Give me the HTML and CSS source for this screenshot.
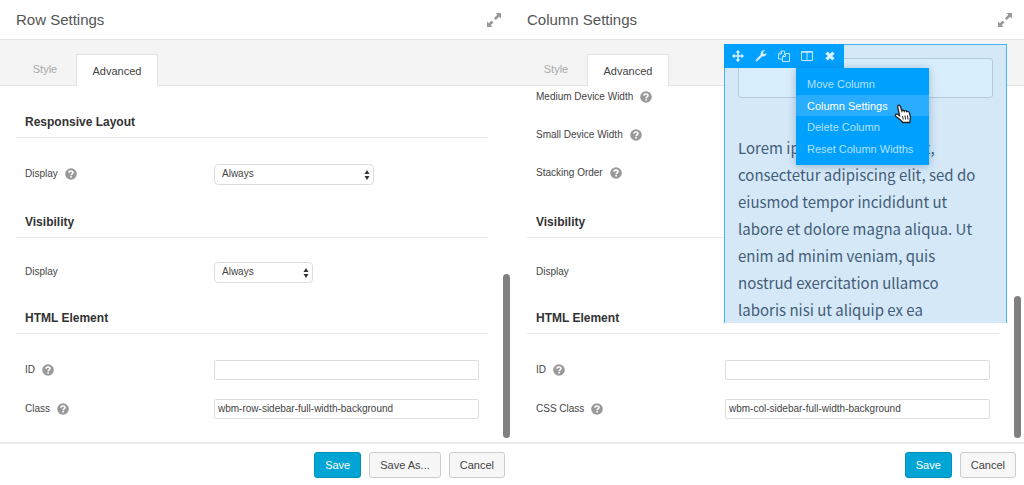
FILE: index.html
```html
<!DOCTYPE html>
<html lang="en">
<head>
<meta charset="utf-8">
<title>Row and Column Settings</title>
<link rel="stylesheet" href="styles.css">
</head>
<body>
<svg class="sprite" aria-hidden="true">
  <symbol id="expand" viewBox="0 0 14 14">
    <path d="M8.500 0H14V5.500L12.200 3.700 8.800 7.100 6.900 5.200 10.300 1.800ZM5.500 14H0V8.500L1.800 10.300 4.600 7.500 6.500 9.400 3.700 12.200Z"/>
  </symbol>
  <symbol id="help" viewBox="0 0 12 12">
    <circle cx="6" cy="6" r="5.800"/>
    <path d="M4 4.700C4.100 2.500 8 2.500 8 4.600 8 5.900 6.100 5.900 6.100 7.300M6.100 8.100V9.600" fill="none" stroke="#fff" stroke-width="1.600"/>
  </symbol>
</svg>
<div class="workspace">
  <section class="panel">
    <header class="panel-header">
      <h1 class="panel-title">Row Settings</h1>
      <button class="expand" aria-label="Expand"><svg><use href="#expand"/></svg></button>
    </header>
    <nav class="tabs">
      <button class="tab">Style</button>
      <button class="tab tab-active">Advanced</button>
    </nav>
    <div class="panel-body">
      <div class="sections">
        <section class="group">
          <h2 class="group-title">Responsive Layout</h2>
          <div class="fields">
            <div class="field field-tall">
              <span class="field-name"><label for="row-layout">Display</label><svg class="help"><use href="#help"/></svg></span>
              <span class="picker picker-wide"><select id="row-layout"><option>Always</option></select><svg viewBox="0 0 6 10"><path d="M3 0 5.500 4H.5ZM.5 6h5L3 10Z"/></svg></span>
            </div>
          </div>
        </section>
        <section class="group">
          <h2 class="group-title">Visibility</h2>
          <div class="fields">
            <div class="field field-short">
              <span class="field-name"><label for="row-visibility">Display</label></span>
              <span class="picker"><select id="row-visibility"><option>Always</option></select><svg viewBox="0 0 6 10"><path d="M3 0 5.500 4H.5ZM.5 6h5L3 10Z"/></svg></span>
            </div>
          </div>
        </section>
        <section class="group">
          <h2 class="group-title">HTML Element</h2>
          <div class="fields fields-last">
            <div class="field">
              <span class="field-name"><label for="row-id">ID</label><svg class="help"><use href="#help"/></svg></span>
              <input class="text-input" id="row-id" type="text">
            </div>
            <div class="field">
              <span class="field-name"><label for="row-class">Class</label><svg class="help"><use href="#help"/></svg></span>
              <input class="text-input" id="row-class" type="text" value="wbm-row-sidebar-full-width-background">
            </div>
          </div>
        </section>
      </div>
      <div class="scroll-thumb"></div>
    </div>
    <footer class="panel-footer">
      <button class="button button-primary">Save</button>
      <button class="button">Save As...</button>
      <button class="button">Cancel</button>
    </footer>
  </section>

  <section class="panel panel-column">
    <header class="panel-header">
      <h1 class="panel-title">Column Settings</h1>
      <button class="expand" aria-label="Expand"><svg><use href="#expand"/></svg></button>
    </header>
    <nav class="tabs">
      <button class="tab">Style</button>
      <button class="tab tab-active">Advanced</button>
    </nav>
    <div class="panel-body">
      <div class="sections sections-scrolled">
        <section class="group">
          <div class="fields fields-first">
            <div class="field"><span class="field-name">Medium Device Width<svg class="help"><use href="#help"/></svg></span></div>
            <div class="field"><span class="field-name">Small Device Width<svg class="help"><use href="#help"/></svg></span></div>
            <div class="field"><span class="field-name">Stacking Order<svg class="help"><use href="#help"/></svg></span></div>
          </div>
        </section>
        <section class="group">
          <h2 class="group-title">Visibility</h2>
          <div class="fields">
            <div class="field field-short"><span class="field-name">Display</span></div>
          </div>
        </section>
        <section class="group">
          <h2 class="group-title">HTML Element</h2>
          <div class="fields fields-last">
            <div class="field">
              <span class="field-name"><label for="col-id">ID</label><svg class="help"><use href="#help"/></svg></span>
              <input class="text-input" id="col-id" type="text">
            </div>
            <div class="field">
              <span class="field-name"><label for="col-class">CSS Class</label><svg class="help"><use href="#help"/></svg></span>
              <input class="text-input" id="col-class" type="text" value="wbm-col-sidebar-full-width-background">
            </div>
          </div>
        </section>
      </div>
      <div class="scroll-thumb scroll-thumb-short"></div>
    </div>
    <footer class="panel-footer">
      <button class="button button-primary">Save</button>
      <button class="button">Cancel</button>
    </footer>
  </section>

  <div class="overlay">
    <div class="overlay-content">
      <div class="empty-box"></div>
      <p class="copy">Lorem ipsum dolor sit amet, consectetur adipiscing elit, sed do eiusmod tempor incididunt ut labore et dolore magna aliqua. Ut enim ad minim veniam, quis nostrud exercitation ullamco laboris nisi ut aliquip ex ea</p>
    </div>
    <div class="toolbar">
      <button class="tool" aria-label="Move"><svg viewBox="0 0 12 12"><path d="M6 0 8.500 2.600H6.800V5.200H9.400V3.500L12 6 9.400 8.500V6.800H6.800V9.400H8.500L6 12 3.500 9.400H5.200V6.800H2.600V8.500L0 6 2.600 3.500V5.200H5.200V2.600H3.500Z"/></svg></button>
      <button class="tool" aria-label="Settings"><svg viewBox="0 0 12 12"><path fill-rule="evenodd" d="M10.300.5 8.100 1.900V3.500L9.400 4.300 11.600 3C11.800 5.500 9.400 7 7.200 6.300L2.500 11C1.300 12.200-.1 10.700 1 9.500L5.700 4.800C5 2 7.400-.5 10.300.5ZM2 9.600a.5.500 0 1 0 0 1 .5.500 0 0 0 0-1Z"/></svg></button>
      <button class="tool" aria-label="Duplicate"><svg class="outline" viewBox="0 0 12 12"><path d="M4.500 9H.5V4L3.500 1H6.500V3.500M3.500 1V4H.5M4.500 6.500 7.500 3.500V6.500H4.500V11.500H11.500V3.500H7.500"/></svg></button>
      <button class="tool" aria-label="Columns"><svg class="outline" viewBox="0 0 12 12"><path d="M.5 1.500H11.500V10.500H.5ZM.5 2.300H11.500M6 1.500V10.500"/></svg></button>
      <button class="tool" aria-label="Remove"><svg viewBox="0 0 12 12"><path d="M3.700 1.400 6 3.700 8.300 1.400 10.600 3.700 8.300 6 10.600 8.300 8.300 10.600 6 8.300 3.700 10.600 1.400 8.300 3.700 6 1.400 3.700Z"/></svg></button>
    </div>
    <div class="menu">
      <button class="menu-item">Move Column</button>
      <button class="menu-item menu-item-active">Column Settings</button>
      <button class="menu-item">Delete Column</button>
      <button class="menu-item">Reset Column Widths</button>
      <svg class="pointer" viewBox="0 0 18 20"><path d="M5.500 11.500 3.700 2.800C3.400.9 5.700.5 6.300 2.200L7.900 7C8.300 5.900 10 6 10.300 7.200 10.900 6.200 12.500 6.500 12.800 7.700 13.700 7 15 7.600 15.300 8.700L16.500 13 15.800 18.500H8.800L6.500 16 2 12.500C.5 11.200 1.800 9.300 3.500 10.200Z"/><path class="fingers" d="M8.500 12 9.200 15.500M11 11.500 11.500 15.500M13.500 11.500 14 15.500"/></svg>
    </div>
  </div>
</div>
</body>
</html>
```
FILE: styles.css
```css
* { box-sizing: border-box; }

body {
  margin: 0;
  background: #fff;
  color: #444;
  font: 11px/16px "Liberation Sans", Arial, sans-serif;
}

button, input, select { font: inherit; color: inherit; }
button { margin: 0; padding: 0; border: 0; background: none; }
svg { display: block; }
.sprite { position: absolute; width: 0; height: 0; }

.workspace {
  position: relative;
  display: grid;
  grid-template-columns: calc(50% - 1px) 1fr;
  min-height: 100vh;
}

.panel {
  --edge: 0px;
  display: flex;
  flex-direction: column;
  min-width: 0;
}
.panel-column { --edge: 2px; }

.panel-header {
  display: flex;
  align-items: center;
  justify-content: space-between;
  height: 40px;
  padding: 0 calc(10px + var(--edge)) 0 16px;
  border-bottom: 1px solid #e5e5e5;
}
.panel-title {
  margin: 0;
  color: #555;
  font-size: 15px;
  line-height: 20px;
  font-weight: 400;
}
.expand svg { width: 14px; height: 14px; fill: #999; }

.tabs {
  display: flex;
  align-items: flex-end;
  height: 46px;
  padding-left: 14px;
  background: #f4f4f4;
  border-bottom: 1px solid #e3e3e3;
}
.tab { width: 62px; height: 32px; color: #aaa; }
.tab-active {
  width: 82px;
  margin-bottom: -1px;
  border: 1px solid #e3e3e3;
  border-bottom: 0;
  background: #fff;
  color: #444;
}

.panel-body {
  position: relative;
  flex: 1;
  overflow: hidden;
  font-size: 10px;
}
.sections { padding: 26px 23px 0 16px; }
.sections-scrolled { margin-top: -8px; padding-top: 0; }
.panel-column .sections { padding-right: 25px; }

.group-title {
  margin: 0;
  height: 26px;
  padding-left: 9px;
  border-bottom: 1px solid #e8e8e8;
  color: #333;
  font-size: 12px;
  line-height: 20px;
  font-weight: 700;
}
.fields { padding: 16px 9px 18px; }
.fields-first { padding-top: 0; padding-bottom: 20px; }
.fields-last { padding-bottom: 14px; }
.field { display: flex; align-items: center; height: 39px; }
.fields-first .field { height: 38px; }
.field-tall { height: 40px; }
.field-short { height: 36px; }
.field-name { display: flex; align-items: center; gap: 7px; width: 189px; }
.help { width: 12px; height: 12px; fill: #999; }

.picker { position: relative; width: 99px; height: 21px; }
.picker-wide { width: 160px; }
.picker select {
  appearance: none;
  width: 100%;
  height: 100%;
  padding: 0 16px 0 7px;
  border: 1px solid #ddd;
  border-radius: 4px;
  background: #fff;
}
.picker svg {
  position: absolute;
  top: 6px;
  right: 4px;
  width: 6px;
  height: 10px;
  fill: #333;
  pointer-events: none;
}
.text-input {
  flex: 1;
  min-width: 0;
  height: 20px;
  padding: 0 3px;
  border: 1px solid #ddd;
  border-radius: 2px;
  background: #fff;
}

.scroll-thumb {
  position: absolute;
  right: calc(1px + var(--edge));
  bottom: 4px;
  width: 7px;
  height: 46%;
  border-radius: 4px;
  background: #808080;
}
.scroll-thumb-short { height: 40%; }

.panel-footer {
  display: flex;
  align-items: center;
  justify-content: flex-end;
  gap: 8px;
  height: 44px;
  padding: 0 calc(6px + var(--edge)) 1px 0;
  border-top: 2px solid #ececec;
}
.button {
  height: 26px;
  padding: 0 10px;
  border: 1px solid #ccc;
  border-radius: 3px;
  background: #f7f7f7;
}
.button-primary { border-color: #0091bb; background: #00a5d5; color: #fff; }

.overlay {
  position: absolute;
  top: 44px;
  right: 17px;
  width: 283px;
  border: 1px solid #47b3fb;
  border-bottom: 0;
  background: #d4e8f7;
}
.overlay-content { padding: 13px 13px 0; }
.empty-box {
  height: 40px;
  border: 1px solid #b5cbdb;
  border-radius: 3px;
  background: #d8edfc;
}
.copy {
  margin: 36px 0 0;
  padding-right: 10px;
  color: #445d78;
  font: 15px/27px "Noto Sans CJK SC", sans-serif;
}
.toolbar {
  position: absolute;
  top: -1px;
  left: -1px;
  display: flex;
  align-items: center;
  gap: 11px;
  height: 24px;
  padding: 0 8px;
  background: #00a0ff;
}
.tool svg { width: 12px; height: 12px; fill: #d9f0ff; }
.tool .outline { fill: none; stroke: #bfe7ff; stroke-width: 1; }
.menu {
  position: absolute;
  top: 23px;
  left: 71px;
  display: flex;
  flex-direction: column;
  width: 133px;
  padding: 5px 0;
  background: #00a0ff;
  box-shadow: 0 1px 8px rgba(0, 60, 110, .3);
}
.menu-item {
  height: 22px;
  padding: 0 11px;
  color: #b3e1ff;
  text-align: left;
}
.menu-item-active { height: 21px; background: #2badff; color: #fff; }
.pointer {
  position: absolute;
  top: 36px;
  left: 98px;
  width: 18px;
  height: 20px;
  fill: #fff;
  stroke: #222;
  stroke-width: 1.300;
}
.fingers { fill: none; stroke-width: 1; }
```
